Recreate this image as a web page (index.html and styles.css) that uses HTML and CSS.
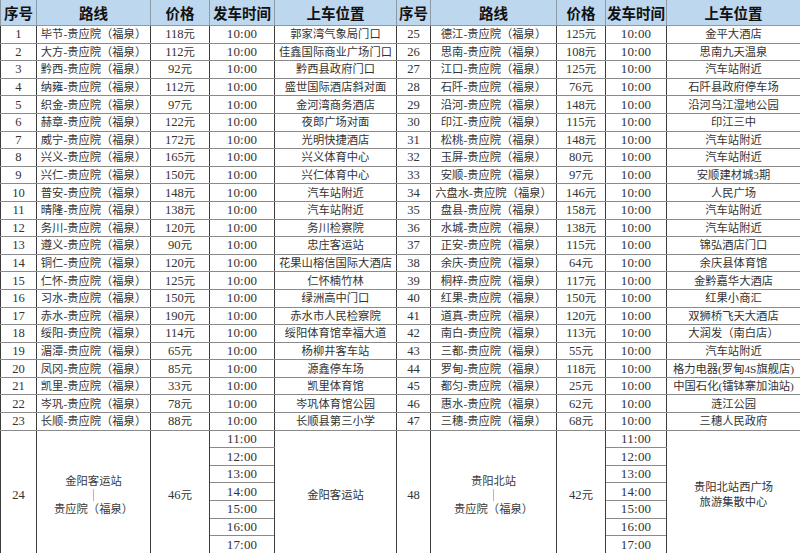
FILE: index.html
```html
<!DOCTYPE html>
<html lang="zh-CN">
<head>
<meta charset="utf-8">
<title>班车时刻表</title>
<link rel="stylesheet" href="styles.css">
</head>
<body>
<table class="sched">
<colgroup>
<col class="c-no1"><col class="c-route1"><col class="c-price1"><col class="c-time1"><col class="c-loc1">
<col class="c-no2"><col class="c-route2"><col class="c-price2"><col class="c-time2"><col class="c-loc2">
</colgroup>
<thead>
<tr class="head">
<th>序号</th><th>路线</th><th>价格</th><th>发车时间</th><th>上车位置</th>
<th>序号</th><th>路线</th><th>价格</th><th>发车时间</th><th>上车位置</th>
</tr>
</thead>
<tbody>
<tr><td class="n">1</td><td>毕节-贵应院（福泉）</td><td><span class="n">118</span>元</td><td class="t">10:00</td><td>郭家湾气象局门口</td><td class="n">25</td><td>德江-贵应院（福泉）</td><td><span class="n">125</span>元</td><td class="t">10:00</td><td>金平大酒店</td></tr>
<tr><td class="n">2</td><td>大方-贵应院（福泉）</td><td><span class="n">112</span>元</td><td class="t">10:00</td><td>佳鑫国际商业广场门口</td><td class="n">26</td><td>思南-贵应院（福泉）</td><td><span class="n">108</span>元</td><td class="t">10:00</td><td>思南九天温泉</td></tr>
<tr><td class="n">3</td><td>黔西-贵应院（福泉）</td><td><span class="n">92</span>元</td><td class="t">10:00</td><td>黔西县政府门口</td><td class="n">27</td><td>江口-贵应院（福泉）</td><td><span class="n">125</span>元</td><td class="t">10:00</td><td>汽车站附近</td></tr>
<tr><td class="n">4</td><td>纳雍-贵应院（福泉）</td><td><span class="n">112</span>元</td><td class="t">10:00</td><td>盛世国际酒店斜对面</td><td class="n">28</td><td>石阡-贵应院（福泉）</td><td><span class="n">76</span>元</td><td class="t">10:00</td><td>石阡县政府停车场</td></tr>
<tr><td class="n">5</td><td>织金-贵应院（福泉）</td><td><span class="n">97</span>元</td><td class="t">10:00</td><td>金河湾商务酒店</td><td class="n">29</td><td>沿河-贵应院（福泉）</td><td><span class="n">148</span>元</td><td class="t">10:00</td><td>沿河乌江湿地公园</td></tr>
<tr><td class="n">6</td><td>赫章-贵应院（福泉）</td><td><span class="n">122</span>元</td><td class="t">10:00</td><td>夜郎广场对面</td><td class="n">30</td><td>印江-贵应院（福泉）</td><td><span class="n">115</span>元</td><td class="t">10:00</td><td>印江三中</td></tr>
<tr><td class="n">7</td><td>威宁-贵应院（福泉）</td><td><span class="n">172</span>元</td><td class="t">10:00</td><td>光明快捷酒店</td><td class="n">31</td><td>松桃-贵应院（福泉）</td><td><span class="n">148</span>元</td><td class="t">10:00</td><td>汽车站附近</td></tr>
<tr><td class="n">8</td><td>兴义-贵应院（福泉）</td><td><span class="n">165</span>元</td><td class="t">10:00</td><td>兴义体育中心</td><td class="n">32</td><td>玉屏-贵应院（福泉）</td><td><span class="n">80</span>元</td><td class="t">10:00</td><td>汽车站附近</td></tr>
<tr><td class="n">9</td><td>兴仁-贵应院（福泉）</td><td><span class="n">150</span>元</td><td class="t">10:00</td><td>兴仁体育中心</td><td class="n">33</td><td>安顺-贵应院（福泉）</td><td><span class="n">97</span>元</td><td class="t">10:00</td><td>安顺建材城3期</td></tr>
<tr><td class="n">10</td><td>普安-贵应院（福泉）</td><td><span class="n">148</span>元</td><td class="t">10:00</td><td>汽车站附近</td><td class="n">34</td><td>六盘水-贵应院（福泉）</td><td><span class="n">146</span>元</td><td class="t">10:00</td><td>人民广场</td></tr>
<tr><td class="n">11</td><td>晴隆-贵应院（福泉）</td><td><span class="n">138</span>元</td><td class="t">10:00</td><td>汽车站附近</td><td class="n">35</td><td>盘县-贵应院（福泉）</td><td><span class="n">158</span>元</td><td class="t">10:00</td><td>汽车站附近</td></tr>
<tr><td class="n">12</td><td>务川-贵应院（福泉）</td><td><span class="n">120</span>元</td><td class="t">10:00</td><td>务川检察院</td><td class="n">36</td><td>水城-贵应院（福泉）</td><td><span class="n">138</span>元</td><td class="t">10:00</td><td>汽车站附近</td></tr>
<tr><td class="n">13</td><td>遵义-贵应院（福泉）</td><td><span class="n">90</span>元</td><td class="t">10:00</td><td>忠庄客运站</td><td class="n">37</td><td>正安-贵应院（福泉）</td><td><span class="n">115</span>元</td><td class="t">10:00</td><td>锦弘酒店门口</td></tr>
<tr><td class="n">14</td><td>铜仁-贵应院（福泉）</td><td><span class="n">120</span>元</td><td class="t">10:00</td><td>花果山榕信国际大酒店</td><td class="n">38</td><td>余庆-贵应院（福泉）</td><td><span class="n">64</span>元</td><td class="t">10:00</td><td>余庆县体育馆</td></tr>
<tr><td class="n">15</td><td>仁怀-贵应院（福泉）</td><td><span class="n">125</span>元</td><td class="t">10:00</td><td>仁怀楠竹林</td><td class="n">39</td><td>桐梓-贵应院（福泉）</td><td><span class="n">117</span>元</td><td class="t">10:00</td><td>金黔嘉华大酒店</td></tr>
<tr><td class="n">16</td><td>习水-贵应院（福泉）</td><td><span class="n">150</span>元</td><td class="t">10:00</td><td>绿洲高中门口</td><td class="n">40</td><td>红果-贵应院（福泉）</td><td><span class="n">150</span>元</td><td class="t">10:00</td><td>红果小商汇</td></tr>
<tr><td class="n">17</td><td>赤水-贵应院（福泉）</td><td><span class="n">190</span>元</td><td class="t">10:00</td><td>赤水市人民检察院</td><td class="n">41</td><td>道真-贵应院（福泉）</td><td><span class="n">120</span>元</td><td class="t">10:00</td><td>双狮桥飞天大酒店</td></tr>
<tr><td class="n">18</td><td>绥阳-贵应院（福泉）</td><td><span class="n">114</span>元</td><td class="t">10:00</td><td>绥阳体育馆幸福大道</td><td class="n">42</td><td>南白-贵应院（福泉）</td><td><span class="n">113</span>元</td><td class="t">10:00</td><td>大润发（南白店）</td></tr>
<tr><td class="n">19</td><td>湄潭-贵应院（福泉）</td><td><span class="n">65</span>元</td><td class="t">10:00</td><td>杨柳井客车站</td><td class="n">43</td><td>三都-贵应院（福泉）</td><td><span class="n">55</span>元</td><td class="t">10:00</td><td>汽车站附近</td></tr>
<tr><td class="n">20</td><td>凤冈-贵应院（福泉）</td><td><span class="n">85</span>元</td><td class="t">10:00</td><td>源鑫停车场</td><td class="n">44</td><td>罗甸-贵应院（福泉）</td><td><span class="n">118</span>元</td><td class="t">10:00</td><td>格力电器(罗甸4S旗舰店)</td></tr>
<tr><td class="n">21</td><td>凯里-贵应院（福泉）</td><td><span class="n">33</span>元</td><td class="t">10:00</td><td>凯里体育馆</td><td class="n">45</td><td>都匀-贵应院（福泉）</td><td><span class="n">25</span>元</td><td class="t">10:00</td><td>中国石化(镭钵寨加油站)</td></tr>
<tr><td class="n">22</td><td>岑巩-贵应院（福泉）</td><td><span class="n">78</span>元</td><td class="t">10:00</td><td>岑巩体育馆公园</td><td class="n">46</td><td>惠水-贵应院（福泉）</td><td><span class="n">62</span>元</td><td class="t">10:00</td><td>涟江公园</td></tr>
<tr><td class="n">23</td><td>长顺-贵应院（福泉）</td><td><span class="n">88</span>元</td><td class="t">10:00</td><td>长顺县第三小学</td><td class="n">47</td><td>三穗-贵应院（福泉）</td><td><span class="n">68</span>元</td><td class="t">10:00</td><td>三穗人民政府</td></tr>
<tr>
<td rowspan="7" class="span n">24</td>
<td rowspan="7" class="span"><div class="stack"><span>金阳客运站</span><i class="bar"></i><span>贵应院（福泉）</span></div></td>
<td rowspan="7" class="span"><span class="n">46</span>元</td>
<td class="t">11:00</td>
<td rowspan="7" class="span">金阳客运站</td>
<td rowspan="7" class="span n">48</td>
<td rowspan="7" class="span"><div class="stack"><span>贵阳北站</span><i class="bar"></i><span>贵应院（福泉）</span></div></td>
<td rowspan="7" class="span"><span class="n">42</span>元</td>
<td class="t">11:00</td>
<td rowspan="7" class="span"><div class="stack2"><span>贵阳北站西广场</span><span>旅游集散中心</span></div></td>
</tr>
<tr><td class="t">12:00</td><td class="t">12:00</td></tr>
<tr><td class="t">13:00</td><td class="t">13:00</td></tr>
<tr><td class="t">14:00</td><td class="t">14:00</td></tr>
<tr><td class="t">15:00</td><td class="t">15:00</td></tr>
<tr><td class="t">16:00</td><td class="t">16:00</td></tr>
<tr class="last"><td class="t">17:00</td><td class="t">17:00</td></tr>
</tbody>
</table>
</body>
</html>
```
FILE: styles.css
```css
html, body {
  margin: 0;
  padding: 0;
  background: #ffffff;
  overflow: hidden;
}

.sched {
  border-collapse: collapse;
  table-layout: fixed;
  width: 800px;
  font-family: "Liberation Serif", "Noto Sans CJK SC", serif;
  font-size: 11.3px;
  color: #333333;
}

.c-no1 { width: 36px; }
.c-route1 { width: 114px; }
.c-price1 { width: 59px; }
.c-time1 { width: 65px; }
.c-loc1 { width: 122px; }
.c-no2 { width: 34px; }
.c-route2 { width: 126px; }
.c-price2 { width: 49px; }
.c-time2 { width: 61px; }
.c-loc2 { width: 134px; }

.head th {
  height: 25px;
  padding: 0;
  background: #bdd7ee;
  font-family: "Noto Sans CJK SC", sans-serif;
  font-weight: 700;
  font-size: 14.5px;
  color: #111;
  border: 1px solid #8c9aa8;
  border-top: none;
  white-space: nowrap;
  overflow: hidden;
}

.sched td {
  height: 16.6px;
  padding: 0;
  line-height: 16px;
  text-align: center;
  white-space: nowrap;
  overflow: hidden;
  border-left: 1px solid #3c3c3c;
  border-right: 1px solid #3c3c3c;
  border-bottom: 1px solid #8a8a8a;
}

.sched td.n,
.sched span.n {
  font-size: 12.6px;
}

.sched td.t {
  font-size: 13px;
  letter-spacing: 0.2px;
}

.sched td.span {
  vertical-align: middle;
  padding-top: 7px;
  border-bottom: none;
}

.sched tr.last td {
  border-bottom: none;
}

.stack {
  display: flex;
  flex-direction: column;
  align-items: center;
  gap: 1px;
  line-height: 14px;
  color: #3a3a3a;
}

.bar {
  display: block;
  width: 1px;
  height: 12px;
  background: #b8b8b8;
}

.stack2 {
  display: flex;
  flex-direction: column;
  align-items: center;
  line-height: 15px;
}
```
